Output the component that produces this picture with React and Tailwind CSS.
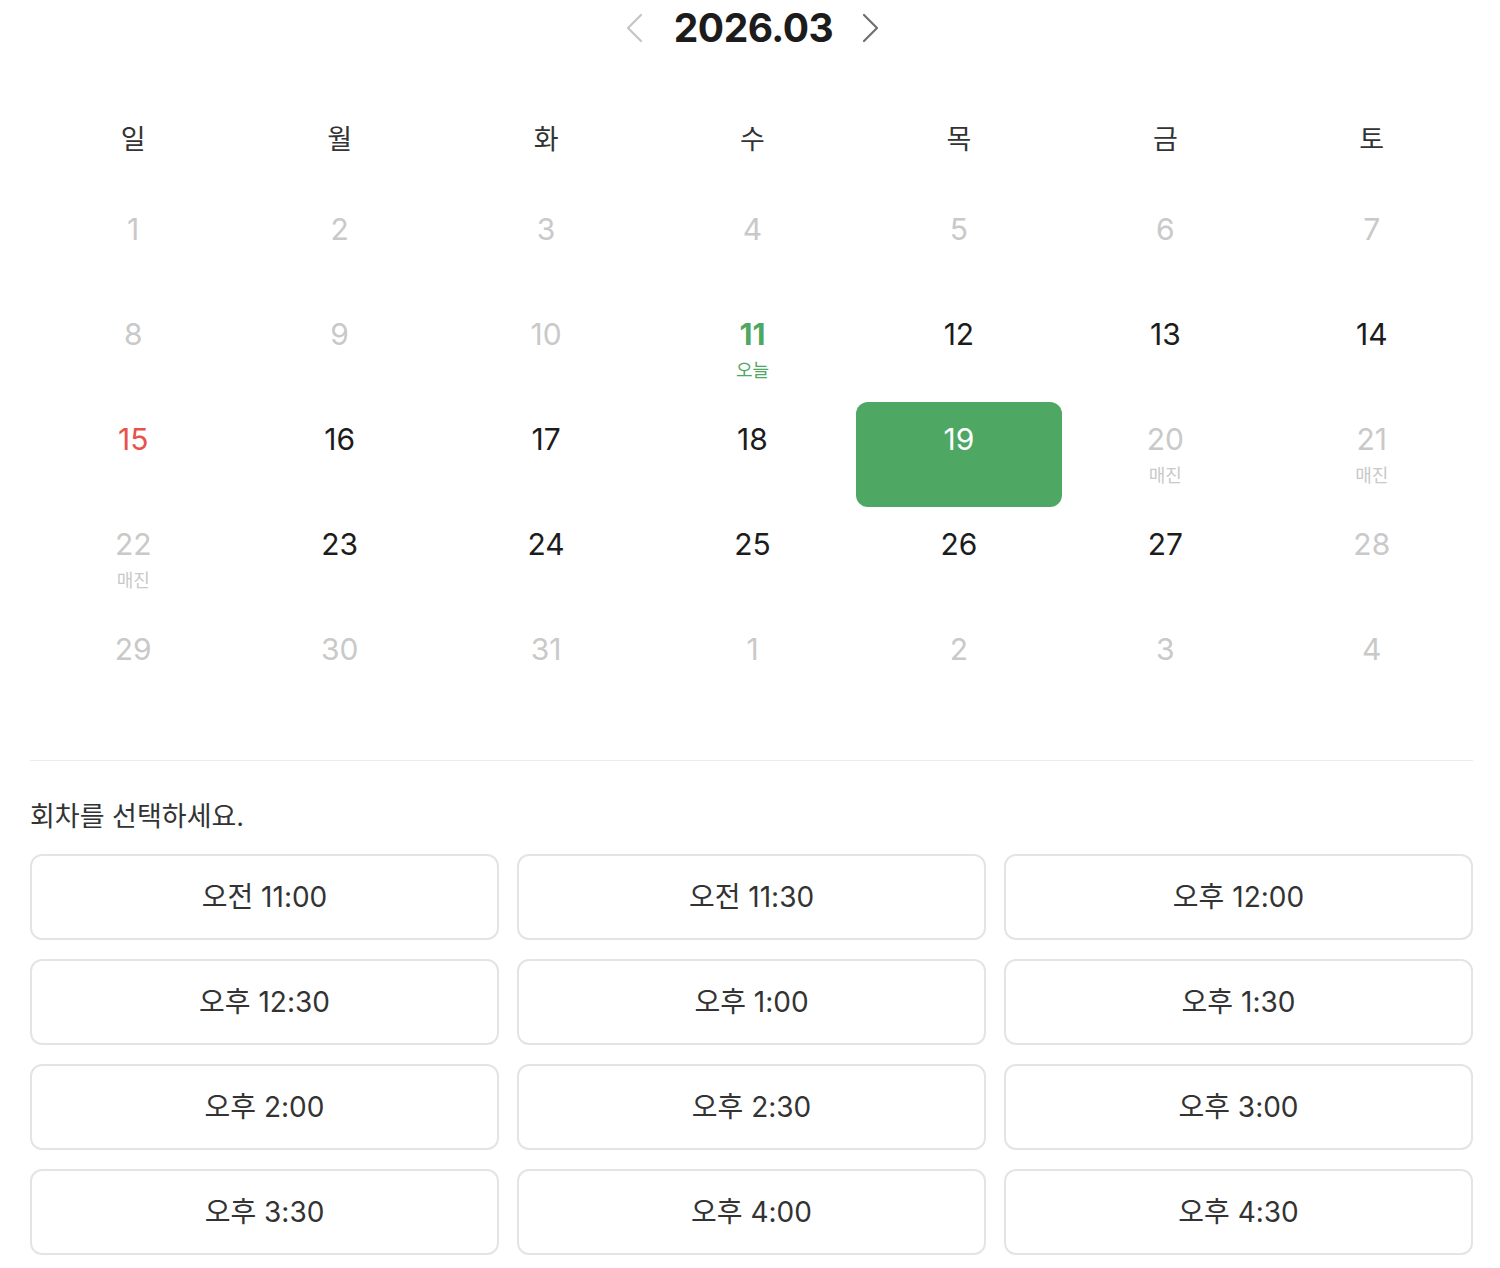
import React from "react";

const FONT = { fontFamily: 'Inter, "Noto Sans CJK KR", sans-serif' };

const weekdays = ["일", "월", "화", "수", "목", "금", "토"];

const days = [
  [1, "muted"], [2, "muted"], [3, "muted"], [4, "muted"], [5, "muted"], [6, "muted"], [7, "muted"],
  [8, "muted"], [9, "muted"], [10, "muted"], [11, "today"], [12, "normal"], [13, "normal"], [14, "normal"],
  [15, "sunday"], [16, "normal"], [17, "normal"], [18, "normal"], [19, "selected"], [20, "soldout"], [21, "soldout"],
  [22, "soldout"], [23, "normal"], [24, "normal"], [25, "normal"], [26, "normal"], [27, "normal"], [28, "muted"],
  [29, "muted"], [30, "muted"], [31, "muted"], [1, "muted"], [2, "muted"], [3, "muted"], [4, "muted"],
];

const times = [
  "오전 11:00", "오전 11:30", "오후 12:00",
  "오후 12:30", "오후 1:00", "오후 1:30",
  "오후 2:00", "오후 2:30", "오후 3:00",
  "오후 3:30", "오후 4:00", "오후 4:30",
];

function DayCell({ n, type }) {
  if (type === "selected") {
    return (
      <div className="h-[105px] flex flex-col items-center pt-[19px] bg-[#4ea762] rounded-[12px]">
        <span className="text-[30px] leading-[36px] text-white">{n}</span>
      </div>
    );
  }
  const numCls =
    type === "muted" || type === "soldout"
      ? "text-[#c9c9c9]"
      : type === "sunday"
      ? "text-[#e8524a]"
      : type === "today"
      ? "text-[#4ea762] font-bold"
      : "text-[#1c1c1c]";
  return (
    <div className="h-[105px] flex flex-col items-center pt-[19px]">
      <span className={`text-[30px] leading-[36px] ${numCls}`}>{n}</span>
      {type === "today" && (
        <span className="mt-[8px] text-[18px] leading-[22px] text-[#4ea762]">오늘</span>
      )}
      {type === "soldout" && (
        <span className="mt-[8px] text-[18px] leading-[22px] text-[#c9c9c9]">매진</span>
      )}
    </div>
  );
}

export default function App() {
  return (
    <div className="bg-white w-[1500px] min-h-[1268px] pl-[30px] pr-[25px]" style={FONT}>
      <div className="h-[56px] flex items-center justify-center">
        <svg width="20" height="30" viewBox="0 0 20 30" className="mr-[30px]">
          <polyline points="17,2 4,15 17,28" fill="none" stroke="#c4c4c4" strokeWidth="2.2" strokeLinecap="round" strokeLinejoin="round" />
        </svg>
        <span className="text-[39px] leading-[50px] font-bold text-[#1c1c1c] tracking-[-0.5px]">2026.03</span>
        <svg width="20" height="30" viewBox="0 0 20 30" className="ml-[28px]">
          <polyline points="3,2 16,15 3,28" fill="none" stroke="#6f6f6f" strokeWidth="2.2" strokeLinecap="round" strokeLinejoin="round" />
        </svg>
      </div>

      <div className="grid grid-cols-7 mt-[54px] h-[60px] items-center">
        {weekdays.map((w) => (
          <div key={w} className="text-center text-[27px] text-[#333333]">{w}</div>
        ))}
      </div>

      <div className="grid grid-cols-7 mt-[22px]">
        {days.map(([n, t], i) => (
          <DayCell key={i} n={n} type={t} />
        ))}
      </div>

      <div className="mt-[43px] h-px bg-[#ececec] mr-[2px]" />

      <div className="mt-[38px] text-[27px] leading-[36px] text-[#333333]">회차를 선택하세요.</div>

      <div className="mt-[19px] grid grid-cols-3 gap-x-[18px] gap-y-[19px] mr-[2px]">
        {times.map((t) => (
          <button
            key={t}
            className="h-[86px] rounded-[12px] border-2 border-[#e4e4e4] bg-white text-[28px] text-[#333333] flex items-center justify-center"
            style={FONT}
          >
            {t}
          </button>
        ))}
      </div>
    </div>
  );
}
